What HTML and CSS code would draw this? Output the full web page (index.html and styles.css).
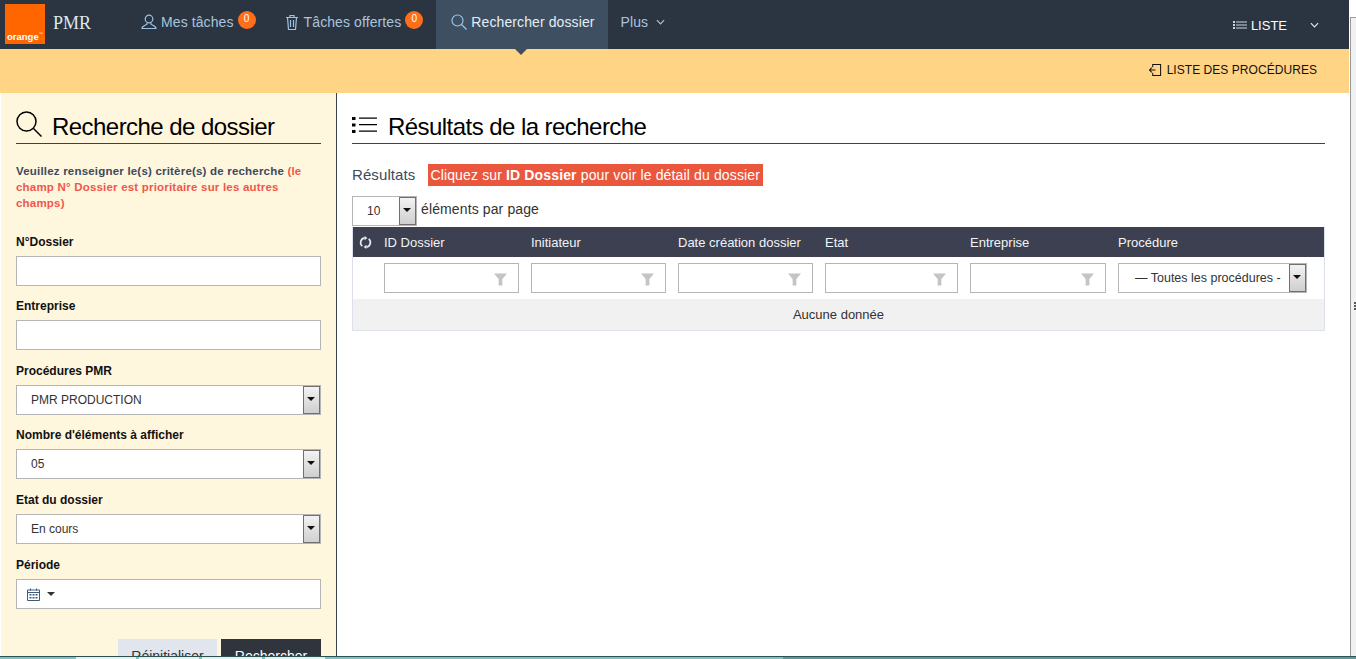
FILE: index.html
```html
<!DOCTYPE html>
<html>
<head>
    <meta charset="UTF-8">
    <title>PMR - Recherche de dossier</title>
    <link rel="stylesheet" href="styles.css">
</head>
<body>
    <div class="page">
        <header class="topbar">
            <div class="logo"><span class="logo-text">orange<sup>™</sup></span></div>
            <div class="brand">PMR</div>
            <nav class="nav">
                <a class="nav-item">
                    <svg class="nav-icon" viewBox="0 0 16 16"><circle cx="8" cy="5" r="3.8"/><path d="M6 8.5V10c0 1-4.800 1.500-5 4.500h14c-.2-3-5-3.500-5-4.500V8.500"/></svg>
                    <span>Mes tâches</span>
                    <span class="badge">0</span>
                </a>
                <a class="nav-item">
                    <svg class="nav-icon" viewBox="0 0 16 16"><path d="M2 3.500h12M6 3.500v-2h4v2M3.500 3.500l1 12h7l1-12M6.500 6v7M9.500 6v7"/></svg>
                    <span>Tâches offertes</span>
                    <span class="badge">0</span>
                </a>
                <a class="nav-item active">
                    <svg class="nav-icon" viewBox="0 0 16 16"><circle cx="6.500" cy="6.500" r="5.500"/><path d="M10.500 10.500l5 5"/></svg>
                    <span>Rechercher dossier</span>
                </a>
                <a class="nav-item plain">
                    <span>Plus</span>
                    <svg class="chevron" viewBox="0 0 10 6"><path d="M1 1l4 4 4-4"/></svg>
                </a>
            </nav>
            <div class="top-right">
                <svg class="list-small" viewBox="0 0 14 10"><path d="M0 1h2v2H0zM0 4h2v2H0zM0 7h2v2H0zM3 1.500h11v1H3zM3 4.500h11v1H3zM3 7.500h11v1H3z"/></svg>
                <span class="liste">LISTE</span>
                <svg class="chevron white" viewBox="0 0 10 6"><path d="M1 1l4 4 4-4"/></svg>
            </div>
        </header>

        <div class="subbar">
            <svg class="exit-icon" viewBox="0 0 14 14"><path d="M4 4V1h8.500v12H4v-3M.5 7H7M3 4.500L.5 7 3 9.500"/></svg>
            <span>LISTE DES PROCÉDURES</span>
        </div>

        <div class="content">
            <aside class="sidebar">
                <h2 class="panel-title">
                    <svg class="title-icon" viewBox="0 0 26 26"><circle cx="10.500" cy="10.500" r="9.500"/><path d="M17.500 17.500l8 8"/></svg>
                    <span>Recherche de dossier</span>
                </h2>
                <p class="intro">Veuillez renseigner le(s) critère(s) de recherche <span class="warn">(le champ N° Dossier est prioritaire sur les autres champs)</span></p>

                <div class="field">
                    <label>N°Dossier</label>
                    <div class="input"></div>
                </div>
                <div class="field">
                    <label>Entreprise</label>
                    <div class="input"></div>
                </div>
                <div class="field">
                    <label>Procédures PMR</label>
                    <div class="input select"><span>PMR PRODUCTION</span><i class="select-btn"></i></div>
                </div>
                <div class="field">
                    <label>Nombre d'éléments à afficher</label>
                    <div class="input select"><span>05</span><i class="select-btn"></i></div>
                </div>
                <div class="field">
                    <label>Etat du dossier</label>
                    <div class="input select"><span>En cours</span><i class="select-btn"></i></div>
                </div>
                <div class="field field-last">
                    <label>Période</label>
                    <div class="input date">
                        <svg class="cal-icon" viewBox="0 0 13 13"><path d="M.5 2h12v10.500H.5zM.5 4.500h12M3.500.5v2M9.500.5v2"/><path class="cal-dots" d="M2.500 6h2v1.500h-2zM5.500 6h2v1.500h-2zM8.500 6h2v1.500h-2zM2.500 9h2v1.500h-2zM5.500 9h2v1.500h-2zM8.500 9h2v1.500h-2z"/></svg>
                        <i class="caret"></i>
                    </div>
                </div>
                <div class="actions">
                    <button class="btn light">Réinitialiser</button>
                    <button class="btn dark">Rechercher</button>
                </div>
            </aside>

            <main class="results">
                <h2 class="panel-title">
                    <svg class="title-icon list" viewBox="0 0 26 18"><path d="M0 1h3.500v3H0zM0 7.500h3.500v3H0zM0 14h3.500v3H0z"/><path d="M7 1.500h18v1.200H7zM7 8h18v1.200H7zM7 14.500h18v1.200H7z"/></svg>
                    <span>Résultats de la recherche</span>
                </h2>
                <div class="result-info">
                    <span class="result-label">Résultats</span>
                    <span class="notice">Cliquez sur <b>ID Dossier</b> pour voir le détail du dossier</span>
                </div>
                <div class="page-size">
                    <div class="mini-select"><span>10</span><i class="select-btn"></i></div>
                    <span class="page-size-label">éléments par page</span>
                </div>

                <div class="grid">
                    <div class="grid-row grid-head">
                        <div class="cell-refresh">
                            <svg viewBox="0 0 14 14"><path d="M6 2A5.200 5.200 0 0 0 3.500 11M8 12A5.200 5.200 0 0 0 10.500 3"/><path class="fill" d="M6 0l3 2.200-3 2.300zM8 14l-3-2.200 3-2.300z"/></svg>
                        </div>
                        <div>ID Dossier</div>
                        <div>Initiateur</div>
                        <div>Date création dossier</div>
                        <div>Etat</div>
                        <div>Entreprise</div>
                        <div>Procédure</div>
                    </div>
                    <div class="grid-row grid-filter">
                        <div></div>
                        <div class="filter"><svg class="funnel" viewBox="0 0 14 13"><path d="M0 0h14L9 6v7H5V6z"/></svg></div>
                        <div class="filter"><svg class="funnel" viewBox="0 0 14 13"><path d="M0 0h14L9 6v7H5V6z"/></svg></div>
                        <div class="filter"><svg class="funnel" viewBox="0 0 14 13"><path d="M0 0h14L9 6v7H5V6z"/></svg></div>
                        <div class="filter"><svg class="funnel" viewBox="0 0 14 13"><path d="M0 0h14L9 6v7H5V6z"/></svg></div>
                        <div class="filter"><svg class="funnel" viewBox="0 0 14 13"><path d="M0 0h14L9 6v7H5V6z"/></svg></div>
                        <div class="filter select-filter"><span>— Toutes les procédures -</span><i class="select-btn"></i></div>
                    </div>
                    <div class="grid-empty">Aucune donnée</div>
                </div>
            </main>
        </div>
        <div class="taskbar">
            <i class="task-tab"></i>
            <i class="task-tab"></i>
            <i class="task-tab"></i>
            <i class="task-tab"></i>
        </div>
    </div>
    <div class="edge"><i class="edge-grip"></i></div>
</body>
</html>
```

FILE: styles.css
```css
* {
    box-sizing: border-box;
}

html, body {
    margin: 0;
    height: 100%;
    overflow: hidden;
}

body {
    display: flex;
    font-family: "Liberation Sans", Arial, sans-serif;
    font-size: 14px;
    color: #2d3742;
    background: #fff;
}

.page {
    width: 1349px;
    height: 659px;
    flex: none;
    display: flex;
    flex-direction: column;
    position: relative;
    z-index: 1;
}

.edge {
    width: 6px;
    flex: none;
    margin: 17px 0 0 1px;
    border-left: 1px solid #999;
    border-top: 1px solid #999;
    background: #f1f1f1;
    position: relative;
}

.edge-grip {
    position: absolute;
    left: 3px;
    top: 284px;
    width: 2px;
    height: 8px;
    background: repeating-linear-gradient(#555 0, #555 2px, transparent 2px, transparent 3px);
}

/* barre du haut */
.topbar {
    height: 49px;
    background: #2b3542;
    display: flex;
    align-items: stretch;
    color: #a9c4dc;
    flex: none;
}

.logo {
    width: 40px;
    height: 40px;
    margin: 4px 0 0 5px;
    background: #ff6600;
    display: flex;
    align-items: flex-end;
    padding: 0 0 1px 2px;
}

.logo-text {
    color: #fff;
    font-size: 9.5px;
    font-weight: bold;
    line-height: 12px;
    white-space: nowrap;
}

.logo-text sup {
    font-size: 4px;
    font-weight: normal;
    vertical-align: 5px;
    line-height: 0;
}

.brand {
    font-family: "Liberation Serif", serif;
    font-size: 18px;
    color: #dfe7ee;
    width: 81px;
    padding: 13px 0 0 8px;
}

.nav {
    display: flex;
}

.nav-item {
    display: flex;
    align-items: center;
    padding: 0 13px 5px 15px;
    font-size: 14px;
    letter-spacing: 0.1px;
    color: #a9c4dc;
    white-space: nowrap;
}

.nav-item.active {
    background: #3f4f62;
    color: #e3edf5;
    position: relative;
}

.nav-item.plain {
    padding-left: 13px;
}

.nav-item.active::after {
    content: "";
    position: absolute;
    left: 79px;
    top: 49px;
    border: 6px solid transparent;
    border-top-color: #3f4f62;
    border-bottom: 0;
}

.nav-icon {
    width: 16px;
    height: 16px;
    fill: none;
    stroke: #9cc3e6;
    stroke-width: 1.2;
    margin-right: 4px;
    flex: none;
}

.badge {
    width: 18px;
    height: 18px;
    margin: -4px 0 0 4px;
    border-radius: 50%;
    background: #ff6f1a;
    color: #fff;
    font-size: 10px;
    line-height: 16px;
    text-align: center;
}

.chevron {
    width: 9px;
    height: 6px;
    fill: none;
    stroke: #a9c4dc;
    stroke-width: 1.3;
    margin-left: 8px;
}

.top-right {
    margin-left: auto;
    display: flex;
    align-items: center;
    color: #fff;
    font-size: 13px;
    padding: 1px 30px 0 0;
}

.list-small {
    width: 14px;
    height: 10px;
    fill: #c9d6e2;
    margin-right: 4px;
}

.chevron.white {
    stroke: #dce8f2;
    margin-left: 23px;
}

/* bandeau orange */
.subbar {
    height: 44px;
    flex: none;
    background: #ffd485;
    display: flex;
    align-items: center;
    justify-content: flex-end;
    padding: 0 32px 2px 0;
    color: #111;
    font-size: 12px;
    letter-spacing: 0.05px;
}

.exit-icon {
    width: 13px;
    height: 14px;
    fill: none;
    stroke: #111;
    stroke-width: 1.1;
    margin-right: 5px;
}

.content {
    flex: 1;
    display: flex;
    min-height: 0;
}

.sidebar {
    width: 337px;
    flex: none;
    background: #fff6de;
    border-left: 1px solid #fff;
    border-right: 1px solid #3c4150;
    padding: 0 15px;
    overflow: hidden;
}

.panel-title {
    margin: 0;
    height: 51px;
    padding-top: 19px;
    font-size: 24px;
    font-weight: normal;
    letter-spacing: -0.55px;
    line-height: 30px;
    color: #000;
    border-bottom: 1px solid #3c4150;
    display: flex;
    align-items: flex-start;
}

.title-icon {
    width: 26px;
    height: 26px;
    flex: none;
    fill: none;
    stroke: #000;
    stroke-width: 1.5;
    margin: -1px 10px 0 0;
}

.title-icon.list {
    height: 18px;
    fill: #000;
    stroke: none;
    margin-top: 4px;
}

.intro {
    margin: 19px 0 0;
    font-size: 11.5px;
    font-weight: bold;
    line-height: 16px;
    color: #3b4a5c;
    letter-spacing: 0.2px;
}

.warn {
    color: #f0564a;
}

.field {
    margin-top: 24px;
}

.field + .field {
    margin-top: 13.45px;
}

.field + .field-last {
    margin-top: 14.25px;
}

label {
    display: block;
    font-size: 12px;
    font-weight: bold;
    line-height: 14px;
    color: #111;
    margin-bottom: 7px;
}

.input {
    height: 30px;
    background: #fff;
    border: 1px solid #b5b5b5;
    font-size: 12px;
    color: #333;
}

.select {
    display: flex;
    align-items: center;
    justify-content: space-between;
    padding-left: 14px;
}

.select-btn {
    display: block;
    width: 17px;
    height: 28px;
    flex: none;
    background: linear-gradient(#f2f2f2, #cfcfcf);
    border: 1px solid #707070;
    position: relative;
}

.select-btn::after {
    content: "";
    position: absolute;
    left: 3px;
    top: 10px;
    border: 4px solid transparent;
    border-top: 4px solid #111;
    border-bottom: 0;
}

.date {
    display: flex;
    align-items: center;
    padding-left: 10px;
}

.cal-icon {
    width: 13px;
    height: 13px;
    fill: none;
    stroke: #3f5a78;
    stroke-width: 1;
}

.cal-dots {
    fill: #3f5a78;
    stroke: none;
}

.caret {
    margin-left: 7px;
    border: 4px solid transparent;
    border-top: 4px solid #333;
    border-bottom: 0;
}

.actions {
    display: flex;
    justify-content: flex-end;
    gap: 4px;
    margin-top: 30px;
}

.btn {
    width: 99px;
    height: 34px;
    border: none;
    font-family: inherit;
    font-size: 14px;
}

.btn.light {
    background: #e1e5ed;
    color: #333;
}

.btn.dark {
    width: 100px;
    background: #2f343d;
    color: #fff;
}

.results {
    flex: 1;
    padding: 0 24px 0 15px;
    min-width: 0;
}

.result-info {
    display: flex;
    align-items: center;
    margin-top: 20px;
    height: 22px;
    color: #3b4a5c;
}

.result-label {
    font-size: 15px;
    letter-spacing: 0.1px;
    margin-top: -1px;
}

.notice {
    margin-left: 13px;
    background: #ea573d;
    color: #fff;
    padding: 0 3px 0 2px;
    line-height: 22px;
    letter-spacing: 0.14px;
    white-space: nowrap;
}

.page-size {
    display: flex;
    align-items: center;
    gap: 4px;
    margin-top: 10px;
    letter-spacing: 0.12px;
    color: #333;
}

.page-size-label {
    margin-top: -5px;
}

.mini-select {
    width: 65px;
    height: 30px;
    border: 1px solid #b5b5b5;
    background: #fff;
    display: flex;
    align-items: center;
    justify-content: space-between;
    padding-left: 14px;
    font-size: 12px;
    letter-spacing: 0;
}

.grid {
    margin-top: 1px;
    border: 1px solid #dbe0ea;
    border-top: 0;
}

.grid-row {
    display: grid;
    grid-template-columns: 19px 135px 135px 135px 133px 136px 189px;
    column-gap: 12px;
}

.grid-head {
    height: 30px;
    background: #3c4050;
    color: #f2f4f7;
    font-size: 13px;
    line-height: 31px;
}

.cell-refresh {
    display: flex;
    align-items: center;
    padding-left: 6px;
}

.cell-refresh svg {
    width: 13px;
    height: 13px;
    flex: none;
    fill: none;
    stroke: #e8ebf0;
    stroke-width: 1.8;
}

.cell-refresh .fill {
    fill: #e8ebf0;
    stroke: none;
}

.grid-filter {
    height: 42px;
    padding-top: 6px;
}

.filter {
    height: 30px;
    border: 1px solid #b5b5b5;
    display: flex;
    align-items: center;
    justify-content: flex-end;
    padding-right: 11px;
}

.funnel {
    width: 13px;
    height: 13px;
    fill: #c4c4c4;
    margin-top: 2px;
}

.select-filter {
    justify-content: space-between;
    padding: 0 0 0 16px;
    font-size: 12.5px;
    color: #333;
    white-space: nowrap;
}

.grid-empty {
    height: 31px;
    background: #f1f1f1;
    text-align: center;
    line-height: 31px;
    font-size: 13px;
    color: #333;
}

/* bas de fenetre, par dessus la page */
.taskbar {
    position: absolute;
    left: 0;
    right: -7px;
    bottom: 0;
    height: 3px;
    display: flex;
    gap: 3px;
    padding-left: 76px;
    background: linear-gradient(90deg, #7cc4c0 783px, #5e9a9a 783px);
    border-top: 1px solid #2f5050;
}

.task-tab {
    width: 60px;
    background: #dff3f0;
}
```
